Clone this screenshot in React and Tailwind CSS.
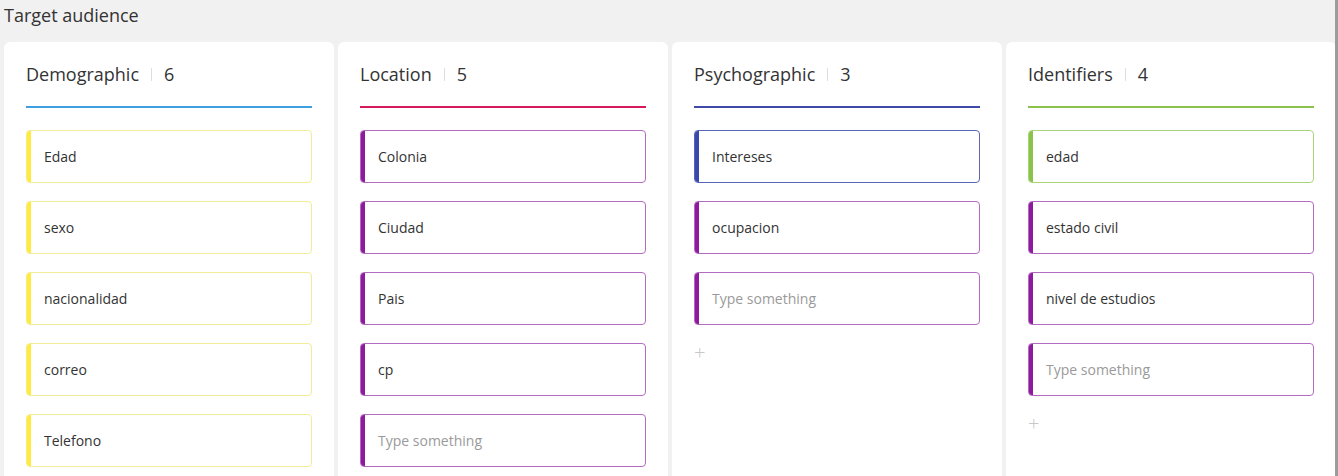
import React from 'react'

const tones = {
  yellow: { bar: 'bg-[#ffeb3b]', border: 'border-[#f2ec96]' },
  purple: { bar: 'bg-[#8e1a9e]', border: 'border-[#b36bc2]' },
  indigo: { bar: 'bg-[#3949ab]', border: 'border-[#5865b8]' },
  green: { bar: 'bg-[#8bc34a]', border: 'border-[#a9d47c]' },
}

const columns = [
  {
    title: 'Demographic',
    count: 6,
    line: 'bg-[#3d9fe0]',
    items: [
      { text: 'Edad', tone: 'yellow' },
      { text: 'sexo', tone: 'yellow' },
      { text: 'nacionalidad', tone: 'yellow' },
      { text: 'correo', tone: 'yellow' },
      { text: 'Telefono', tone: 'yellow' },
    ],
  },
  {
    title: 'Location',
    count: 5,
    line: 'bg-[#d41a5c]',
    items: [
      { text: 'Colonia', tone: 'purple' },
      { text: 'Ciudad', tone: 'purple' },
      { text: 'Pais', tone: 'purple' },
      { text: 'cp', tone: 'purple' },
      { text: 'Type something', tone: 'purple', placeholder: true },
    ],
  },
  {
    title: 'Psychographic',
    count: 3,
    line: 'bg-[#3f4aa8]',
    items: [
      { text: 'Intereses', tone: 'indigo' },
      { text: 'ocupacion', tone: 'purple' },
      { text: 'Type something', tone: 'purple', placeholder: true },
    ],
    plus: true,
  },
  {
    title: 'Identifiers',
    count: 4,
    line: 'bg-[#8bc34a]',
    items: [
      { text: 'edad', tone: 'green' },
      { text: 'estado civil', tone: 'purple' },
      { text: 'nivel de estudios', tone: 'purple' },
      { text: 'Type something', tone: 'purple', placeholder: true },
    ],
    plus: true,
  },
]

const Item = ({ text, tone, placeholder }) => {
  const t = tones[tone]
  return (
    <div className={`relative h-[53px] rounded-[4px] border ${t.border} bg-white flex items-center pl-[17px] overflow-hidden`}>
      <div className={`absolute left-0 top-0 bottom-0 w-[4px] ${t.bar}`} />
      <span className={`text-[14px] ${placeholder ? 'text-[#9a9a9a]' : 'text-[#333]'}`}>{text}</span>
    </div>
  )
}

const Column = ({ col }) => (
  <div className="w-[330px] h-[460px] shrink-0 bg-white rounded-[6px] px-[22px] pt-[20px]">
    {/* Header */}
    <div className="flex items-center h-[24px] text-[18px] text-[#333]">
      <span>{col.title}</span>
      <span className="mx-[12px] w-px h-[13px] bg-[#ddd]" />
      <span>{col.count}</span>
    </div>
    <div className={`mt-[20px] h-[2px] ${col.line}`} />

    {/* Items */}
    <div className="mt-[22px] flex flex-col gap-[18px]">
      {col.items.map((it, i) => (
        <Item key={i} {...it} />
      ))}
    </div>
    {col.plus && (
      <div className="mt-[19px] h-[18px] flex items-center text-[20px] font-light text-[#c8c8c8] leading-none">+</div>
    )}
  </div>
)

export default function App() {
  return (
    <div className="h-[476px] overflow-hidden bg-[#f1f1f1] relative" style={{ fontFamily: '"Open Sans", sans-serif' }}>
      <div className="h-[42px] pl-[4px] pt-[2px] text-[18px] text-[#333] leading-[26px]">Target audience</div>
      <div className="flex gap-[4px] pl-[4px]">
        {columns.map((col) => (
          <Column key={col.title} col={col} />
        ))}
      </div>
      <div className="absolute right-0 top-0 bottom-0 w-[3px] bg-[#9c9c9c]" />
    </div>
  )
}
